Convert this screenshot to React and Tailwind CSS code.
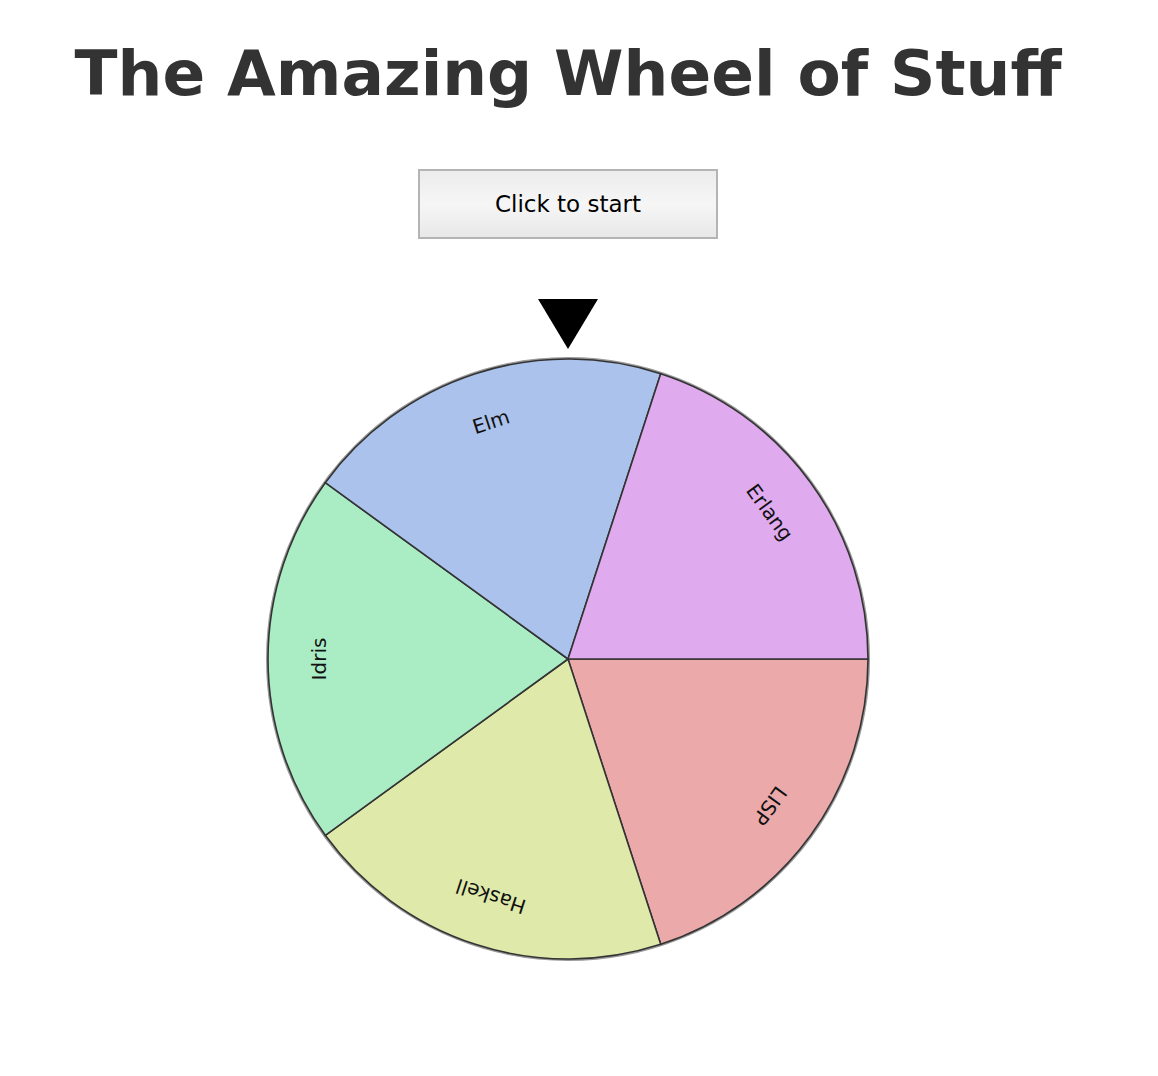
import React from 'react';

const FONT = { fontFamily: '"Comic Sans MS", "DejaVu Sans", sans-serif' };

// five slices, 72° each, angles measured clockwise from the right (screen coords)
const SLICES = [
  { label: 'LISP', color: '#eba9aa', start: 0 },
  { label: 'Haskell', color: '#dfeaaa', start: 72 },
  { label: 'Idris', color: '#aaedc5', start: 144 },
  { label: 'Elm', color: '#abc3ec', start: 216 },
  { label: 'Erlang', color: '#dfaaee', start: 288 },
];

const R = 300;
const C = 302;

function slicePath(start, end) {
  const a1 = (start * Math.PI) / 180;
  const a2 = (end * Math.PI) / 180;
  const x1 = C + R * Math.cos(a1);
  const y1 = C + R * Math.sin(a1);
  const x2 = C + R * Math.cos(a2);
  const y2 = C + R * Math.sin(a2);
  return `M ${C} ${C} L ${x1} ${y1} A ${R} ${R} 0 0 1 ${x2} ${y2} Z`;
}

function Wheel() {
  return (
    <svg width="604" height="604" viewBox="0 0 604 604">
      <circle cx={C} cy={C} r={R + 1} fill="none" stroke="#9a9a9a" strokeWidth="2" />
      {SLICES.map(s => (
        <path
          key={s.label}
          d={slicePath(s.start, s.start + 72)}
          fill={s.color}
          stroke="#333"
          strokeWidth="1.6"
          strokeLinejoin="round"
        />
      ))}
      {SLICES.map(s => (
        <text
          key={s.label + '-t'}
          transform={`translate(${C} ${C}) rotate(${s.start + 36}) translate(248 0) rotate(90)`}
          textAnchor="middle"
          dominantBaseline="middle"
          fontSize="20"
          fill="#111"
          style={FONT}
        >
          {s.label}
        </text>
      ))}
    </svg>
  );
}

export default function App() {
  return (
    <div className="w-[1136px] bg-white min-h-[1076px]" style={FONT}>
      <h1 className="pt-[42px] text-center text-[63px] font-bold leading-none text-[#333]">
        The Amazing Wheel of Stuff
      </h1>

      <div className="flex justify-center mt-[64px]">
        <button className="w-[300px] h-[70px] border-2 border-[#b4b4b4] bg-gradient-to-b from-[#ececec] via-[#f6f6f6] to-[#e8e8e8] text-[23px] text-black">
          Click to start
        </button>
      </div>

      <div className="flex flex-col items-center mt-[60px]">
        <svg width="60" height="50" viewBox="0 0 60 50">
          <polygon points="0,0 60,0 30,50" fill="#000" />
        </svg>
        <div className="mt-[8px]">
          <Wheel />
        </div>
      </div>
    </div>
  );
}
